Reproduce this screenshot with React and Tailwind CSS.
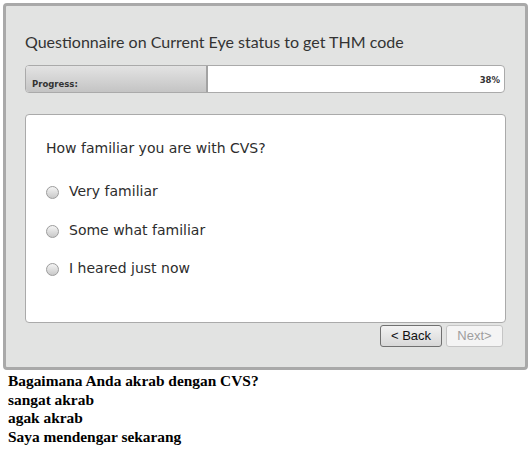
const OPTIONS = ['Very familiar', 'Some what familiar', 'I heared just now'];

const TRANSLATED = [
  'Bagaimana Anda akrab dengan CVS?',
  'sangat akrab',
  'agak akrab',
  'Saya mendengar sekarang',
];

function Radio() {
  return (
    <span className="inline-block w-[13px] h-[13px] rounded-full border border-[#9c9c9c] bg-gradient-to-b from-[#f4f4f4] to-[#c9c9c9] shrink-0" />
  );
}

export default function App() {
  return (
    <div className="w-[530px] h-[449px] bg-white overflow-hidden">
      {/* Questionnaire panel */}
      <div className="ml-[3px] mt-[3px] w-[525px] h-[367px] border-[3px] border-[#a9a9a9] rounded-[4px] bg-[#e2e3e2] px-[19px] pt-[26px]">
        <h1 className="font-['Lato',sans-serif] text-[16px] leading-[20px] text-[#333]">
          Questionnaire on Current Eye status to get THM code
        </h1>

        {/* Progress bar */}
        <div className="mt-[13px] w-[480px] h-[28px] border border-[#aaa] rounded-[4px] bg-white flex overflow-hidden font-['DejaVu_Sans',sans-serif] text-[8.5px] font-bold text-[#333]">
          <div className="w-[182px] h-full bg-gradient-to-b from-[#e3e3e3] to-[#c4c4c4] border-r-2 border-[#a3a3a3] flex items-end pl-[6px] pb-[1px]">
            Progress:
          </div>
          <div className="flex-1 flex items-center justify-end pr-[4px] pt-[3px]">38%</div>
        </div>

        {/* Question card */}
        <div className="mt-[21px] w-[481px] h-[209px] border border-[#aaa] rounded-[4px] bg-white pl-[20px] pt-[25px] font-['DejaVu_Sans',sans-serif] text-[14px] text-[#2d2d2d]">
          <p className="leading-[17px]">How familiar you are with CVS?</p>
          <div className="mt-[26px] flex flex-col gap-[21.5px]">
            {OPTIONS.map((o) => (
              <label key={o} className="flex items-center h-[17px] leading-[17px]">
                <span className="flex mt-[2px]"><Radio /></span>
                <span className="ml-[10px]">{o}</span>
              </label>
            ))}
          </div>
        </div>

        {/* Nav buttons */}
        <div className="mt-[2px] flex justify-end gap-[4px] pr-[3px] font-['Liberation_Sans',sans-serif] text-[13px]">
          <button className="w-[62px] h-[22px] border border-[#707070] rounded-[3px] bg-gradient-to-b from-[#f2f2f2] to-[#d8d8d8] text-[#111]">
            &lt; Back
          </button>
          <button className="w-[57px] h-[22px] border border-[#c5c5c5] rounded-[3px] bg-[#f4f4f4] text-[#9e9e9e]">
            Next&gt;
          </button>
        </div>
      </div>

      {/* Translation */}
      <div className="pl-[8px] pt-[2px] font-['Liberation_Serif',serif] font-bold text-[15.4px] leading-[18.5px] text-black">
        {TRANSLATED.map((t) => (
          <div key={t}>{t}</div>
        ))}
      </div>
    </div>
  );
}
